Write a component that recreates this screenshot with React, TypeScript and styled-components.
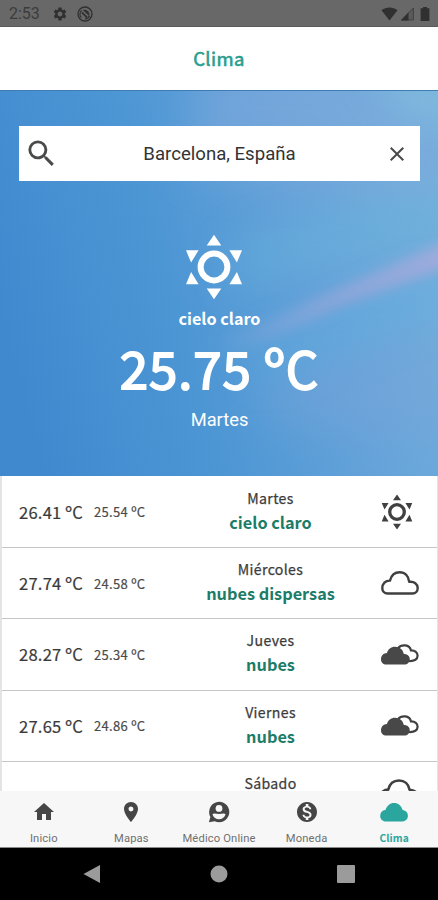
import React from 'react';
import styled, { createGlobalStyle } from 'styled-components';
import {
  MdSettings,
  MdSearch,
  MdClose,
  MdHome,
  MdPlace,
  MdMonetizationOn,
} from 'react-icons/md';

const SOURCE = '"Noto Sans CJK SC", "Noto Sans", sans-serif';
const ROBOTO = 'Roboto, "Liberation Sans", sans-serif';

const GlobalStyle = createGlobalStyle`
  *, *::before, *::after { box-sizing: border-box; }
  body { margin: 0; background: #000; }
`;

const Screen = styled.div`
  display: flex;
  flex-direction: column;
  width: 438px;
  height: 900px;
  overflow: hidden;
  background: #fff;
  font-family: ${SOURCE};
`;

const StatusBar = styled.div`
  display: flex;
  align-items: center;
  flex: none;
  height: 27px;
  padding: 1px 7px 0 9px;
  background: #686868;
  border-bottom: 1px solid #5a5a5a;
  color: #303030;
  font: 400 16px/26px ${ROBOTO};
`;

const Clock = styled.span`
  width: 43px;
  color: #3c3c3c;
`;

const StatusIcons = styled.div<{ $end?: boolean }>`
  display: flex;
  align-items: center;
  gap: ${(p) => (p.$end ? '2px' : '9px')};
  margin-left: ${(p) => (p.$end ? 'auto' : '0')};
  svg { display: block; }
`;

const Header = styled.header`
  flex: none;
  height: 64px;
  border-bottom: 1px solid #3f7cb4;
  color: #2a9d8f;
  font-size: 18.5px;
  line-height: 62px;
  letter-spacing: 0.4px;
  text-align: center;
  -webkit-text-stroke: 0.6px #2a9d8f;
`;

const Hero = styled.section`
  position: relative;
  display: flex;
  flex-direction: column;
  align-items: center;
  flex: none;
  height: 385px;
  padding: 35px 18px 0 19px;
  color: #fff;
  isolation: isolate;
`;

const SkyArt = styled.svg`
  position: absolute;
  inset: 0;
  z-index: -1;
`;

const SearchBox = styled.div`
  display: flex;
  align-items: center;
  align-self: stretch;
  height: 55px;
  padding: 0 11px 0 5px;
  background: #fff;
  color: #4a4a4a;
  svg { display: block; flex: none; }
`;

const SearchText = styled.span`
  flex: 1;
  padding: 1px 5px 0 0;
  color: #333;
  font: 400 18.6px/55px ${ROBOTO};
  text-align: center;
`;

const HeroIcon = styled.div`
  height: 66px;
  margin: 53px 12px 0 0;
`;

const HeroSummary = styled.div`
  height: 28px;
  margin-top: 4px;
  font-size: 16.2px;
  font-weight: 700;
  line-height: 28px;
`;

const HeroTemp = styled.div`
  height: 70px;
  font-size: 51px;
  line-height: 70px;
  letter-spacing: 0.9px;
  white-space: nowrap;
  -webkit-text-stroke: 1.8px #fff;
`;

const HeroDay = styled.div`
  margin-top: 4px;
  font: 400 18.3px/28px ${ROBOTO};
`;

const Forecast = styled.section`
  flex: none;
  height: 315px;
  padding-top: 0.7px;
  overflow: hidden;
  border-left: 2px solid #e4e4e4;
  border-right: 1px solid #e4e4e4;
`;

const Row = styled.div`
  display: grid;
  grid-template-columns: 75px 80px 1fr 70px;
  align-items: center;
  height: 71.3px;
  padding-left: 17px;
  border-bottom: 1.4px solid #c6c6c6;
`;

const High = styled.span`
  color: #3a3a3a;
  font-size: 16.6px;
  line-height: 24px;
  letter-spacing: 0.2px;
  white-space: nowrap;
  -webkit-text-stroke: 0.2px #3a3a3a;
`;

const Low = styled.span`
  padding-top: 1px;
  color: #4a4a4a;
  font-size: 13px;
  line-height: 24px;
  letter-spacing: 0.3px;
  white-space: nowrap;
  -webkit-text-stroke: 0.2px #4a4a4a;
`;

const DayCell = styled.div`
  display: flex;
  flex-direction: column;
  align-items: center;
  margin-top: -3px;
  white-space: nowrap;
`;

const DayName = styled.span`
  color: #3c3c3c;
  font-size: 14.1px;
  line-height: 23px;
  letter-spacing: 0.35px;
  -webkit-text-stroke: 0.25px #3c3c3c;
`;

const DaySummary = styled.span`
  color: #1c7c68;
  font-size: 16.3px;
  font-weight: 700;
  line-height: 24px;
`;

const IconCell = styled.div`
  display: flex;
  width: 40px;
  margin-left: 14px;
  color: #404040;
`;

const TabBar = styled.nav`
  display: grid;
  grid-template-columns: repeat(5, 1fr);
  flex: none;
  height: 57px;
  background: #f7f7f7;
  border-bottom: 1px solid #8a8a8a;
`;

const Tab = styled.div<{ $active?: boolean }>`
  display: flex;
  flex-direction: column;
  align-items: center;
  padding-top: 8px;
  color: ${(p) => (p.$active ? '#2ba69f' : '#464646')};
  svg { display: block; }
`;

const TabIcon = styled.div`
  display: flex;
  align-items: center;
  justify-content: center;
  height: 25px;
`;

const TabLabel = styled.span<{ $active?: boolean }>`
  margin-top: ${(p) => (p.$active ? '7px' : '8px')};
  color: ${(p) => (p.$active ? '#2ba69f' : '#707070')};
  font-family: ${(p) => (p.$active ? SOURCE : ROBOTO)};
  font-size: ${(p) => (p.$active ? '10.2px' : '11.2px')};
  font-weight: ${(p) => (p.$active ? 700 : 400)};
  line-height: 14px;
  letter-spacing: 0.15px;
  white-space: nowrap;
`;

const SystemNav = styled.div`
  display: grid;
  grid-template-columns: 93px 1fr 93px;
  align-items: center;
  justify-items: center;
  flex: 1;
  padding: 0 46px 0 45px;
  background: #000;
`;

const Sun = ({ w, h }: { w: number; h: number }) => (
  <svg width={w} height={h} viewBox="0 0 58 66" fill="currentColor">
    <circle cx="29" cy="33" r="13.4" fill="none" stroke="currentColor" strokeWidth="6" />
    <path d="M29 .8 36.3 11.5H21.7ZM29 65.2 36.3 54.5H21.7ZM1 16.3H13.6L6.1 28.5ZM57 16.3H44.4L51.9 28.5ZM1 50.2H13.6L6.1 38ZM57 50.2H44.4L51.9 38Z" />
  </svg>
);

const CloudOutline = () => (
  <svg width="38" height="24" viewBox="0 0 38 24" fill="none" stroke="currentColor" strokeWidth="2.4" strokeLinejoin="round">
    <path d="M6.6 22.5C3.4 22.5 1.3 20.3 1.3 17.2 1.3 12.8 4.4 9.4 9 9.6 10.3 4.6 14 1.3 18.7 1.3 24 1.3 27.6 5.1 28.2 10.9 33.2 10.2 36.7 13 36.7 17 36.7 20.2 34.6 22.5 31.5 22.5Z" />
  </svg>
);

const RainCloud = () => (
  <svg width="38" height="36" viewBox="0 0 38 36" fill="none" stroke="currentColor" strokeWidth="2.6" strokeLinejoin="round">
    <path d="M6.6 25.5C2.8 25.5-.4 22.4-.4 17.9-.4 13.4 3.2 10.6 7.2 10.6 8.6 4.9 12.6 1.5 18 1.5 23.5 1.5 27.6 5.2 28.6 10.7 33.4 10.9 36.7 13.6 36.7 18.1 36.7 22.4 34.6 25.5 31.5 25.5ZM11 28.5 9 34M19 28.5 17 34M27 28.5 25 34" />
  </svg>
);

const Cloudy = () => (
  <svg width="38" height="21" viewBox="0 0 38 21">
    <path
      d="M17 4.2C20.4 0 28.6.2 30 6.4 34 6.2 36.6 8.6 36.6 11.7 36.6 15 33.6 17.4 28 17"
      fill="none"
      stroke="currentColor"
      strokeWidth="2.2"
    />
    <path
      d="M5.4 20.5C2 20.5 0 18.3 0 15.2 0 11.8 2.6 9.1 6 9 7 5.2 10 2.8 14 2.8 18.7 2.8 22 5.8 22.8 10 26.3 9.9 28.8 12.1 28.8 15.2 28.8 18.3 26.4 20.5 23.3 20.5Z"
      fill="#484848"
    />
  </svg>
);

const DoctorIcon = () => (
  <svg width="22" height="22" viewBox="0 0 22 22">
    <path fill="currentColor" d="M11 .8a10.2 10.2 0 1 1-4.3 19.4L.9 21.3 2.4 16A10.2 10.2 0 0 1 11 .8Z" />
    <circle cx="11" cy="7.4" r="3.4" fill="#f7f7f7" />
    <path fill="#f7f7f7" d="M4.4 13.2C6 11.8 8.2 12.9 11 12.9s5-1.1 6.6.3C16.4 16.6 14.1 18.3 11 18.3s-5.4-1.7-6.6-5.1Z" />
  </svg>
);

const CloudSolid = () => (
  <svg width="28" height="22" viewBox="0 0 28 22" fill="currentColor">
    <path d="M6 20.4C2.5 20.4.2 18 .2 14.9.2 11.6 2.3 9.5 5.4 9.1 6.9 4.7 9.9 2 14 2c4.3 0 7.5 2.7 8.6 7.1 3.2.4 5.3 2.6 5.3 5.8 0 3.1-2.5 5.5-5.9 5.5Z" />
  </svg>
);

const CaptureIcon = () => (
  <svg width="16" height="16" viewBox="0 0 16 16" fill="none" stroke="#303030">
    <circle cx="8" cy="8" r="7" strokeWidth="1.3" />
    <path d="M4.4 11.6A5 5 0 0 1 4.6 4.3M8 12.9A5 5 0 0 0 12.6 9.8" strokeWidth="1.1" />
    <path d="M6.4 4.2C9.6 3.4 12.6 6 12 9.4Z" fill="#303030" strokeWidth=".6" />
    <path d="m4.8 6.4 5.4 5.2" strokeWidth="1.8" />
  </svg>
);

const Sky = () => (
  <SkyArt width="438" height="385" viewBox="0 0 438 385" preserveAspectRatio="none">
    <defs>
      <linearGradient id="base" x1="0" y1="0.6" x2="1" y2="0.35">
        <stop offset="0" stopColor="#4189cf" />
        <stop offset="0.38" stopColor="#4c96d4" />
        <stop offset="0.7" stopColor="#64a2d9" />
        <stop offset="1" stopColor="#74aedc" />
      </linearGradient>
      <filter id="soft" x="-50%" y="-50%" width="200%" height="200%">
        <feGaussianBlur stdDeviation="20" />
      </filter>
      <filter id="streak" x="-20%" y="-50%" width="140%" height="200%">
        <feGaussianBlur stdDeviation="6" />
      </filter>
      <linearGradient id="pink" gradientUnits="userSpaceOnUse" x1="210" y1="0" x2="438" y2="0">
        <stop offset="0" stopColor="#7ea6da" stopOpacity="0" />
        <stop offset="0.5" stopColor="#8ca6da" stopOpacity="0.8" />
        <stop offset="1" stopColor="#9cabdc" />
      </linearGradient>
    </defs>
    <rect width="438" height="385" fill="url(#base)" />
    <path d="M200-30 330-30 450 50 450 110 190 80Z" fill="#82a9dc" opacity=".5" filter="url(#soft)" />
    <path d="M370-20H460V40L400 10Z" fill="#8cc4e0" opacity=".6" filter="url(#soft)" />
    <path d="M240 150 450 95V140L230 195Z" fill="#68b4dc" opacity=".5" filter="url(#soft)" />
    <path d="M250 262 450 180V215L260 285Z" fill="#62b0e0" opacity=".55" filter="url(#soft)" />
    <path d="M205 248 270 228 340 196 470 140V168L340 216 270 249 210 272Z" fill="url(#pink)" filter="url(#streak)" />
    <path d="M250 300 450 240V350L270 330Z" fill="#7aa5d9" opacity=".4" filter="url(#soft)" />
  </SkyArt>
);

const days = [
  { high: '26.41 ºC', low: '25.54 ºC', day: 'Martes', summary: 'cielo claro', icon: <Sun w={32} h={36} /> },
  { high: '27.74 ºC', low: '24.58 ºC', day: 'Miércoles', summary: 'nubes dispersas', icon: <CloudOutline /> },
  { high: '28.27 ºC', low: '25.34 ºC', day: 'Jueves', summary: 'nubes', icon: <Cloudy /> },
  { high: '27.65 ºC', low: '24.86 ºC', day: 'Viernes', summary: 'nubes', icon: <Cloudy /> },
  { high: '27.31 ºC', low: '24.72 ºC', day: 'Sábado', summary: 'lluvia ligera', icon: <RainCloud /> },
];

const tabs = [
  { label: 'Inicio', icon: <MdHome size={24} /> },
  { label: 'Mapas', icon: <MdPlace size={24} /> },
  { label: 'Médico Online', icon: <DoctorIcon /> },
  { label: 'Moneda', icon: <MdMonetizationOn size={24} /> },
  { label: 'Clima', icon: <CloudSolid />, active: true },
];

export default function App() {
  return (
    <>
      <GlobalStyle />
      <Screen>
        <StatusBar>
          <Clock>2:53</Clock>
          <StatusIcons>
            <MdSettings size={16} />
            <CaptureIcon />
          </StatusIcons>
          <StatusIcons $end>
            <svg width="17" height="14" viewBox="0 0 17 14">
              <path d="M.5 3.2C5.2-.3 11.8-.3 16.5 3.2L8.5 13.4Z" fill="#303030" />
            </svg>
            <svg width="15" height="14" viewBox="0 0 15 14">
              <path d="M13.4 1V13H1.4Z" fill="#5a5a5a" stroke="#404040" />
              <path d="M8.5 5.5V13.5H1Z" fill="#303030" />
            </svg>
            <svg width="14" height="16" viewBox="0 0 14 16">
              <path d="M4.6 2.2H6V1h4v1.2h2.4V15H3.6V2.2Z" fill="#303030" />
            </svg>
          </StatusIcons>
        </StatusBar>
        <Header>Clima</Header>
        <Hero>
          <Sky />
          <SearchBox>
            <MdSearch size={35} />
            <SearchText>Barcelona, España</SearchText>
            <MdClose size={24} />
          </SearchBox>
          <HeroIcon><Sun w={58} h={66} /></HeroIcon>
          <HeroSummary>cielo claro</HeroSummary>
          <HeroTemp>25.75 ºC</HeroTemp>
          <HeroDay>Martes</HeroDay>
        </Hero>
        <Forecast>
          {days.map((d) => (
            <Row key={d.day}>
              <High>{d.high}</High>
              <Low>{d.low}</Low>
              <DayCell>
                <DayName>{d.day}</DayName>
                <DaySummary>{d.summary}</DaySummary>
              </DayCell>
              <IconCell>{d.icon}</IconCell>
            </Row>
          ))}
        </Forecast>
        <TabBar>
          {tabs.map((t) => (
            <Tab key={t.label} $active={t.active}>
              <TabIcon>{t.icon}</TabIcon>
              <TabLabel $active={t.active}>{t.label}</TabLabel>
            </Tab>
          ))}
        </TabBar>
        <SystemNav>
          <svg width="18" height="20" viewBox="0 0 18 20"><path d="M17 1V19L.5 10Z" fill="#9b9b9b" /></svg>
          <svg width="18" height="18" viewBox="0 0 18 18"><circle cx="9" cy="9" r="8.5" fill="#9b9b9b" /></svg>
          <svg width="18" height="18" viewBox="0 0 18 18"><rect width="18" height="18" rx="1" fill="#9b9b9b" /></svg>
        </SystemNav>
      </Screen>
    </>
  );
}
